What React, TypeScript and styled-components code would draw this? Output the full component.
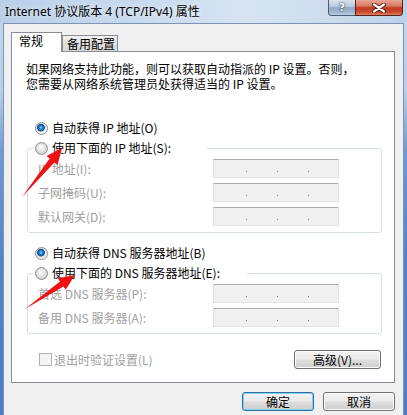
import React from 'react'
import styled, { createGlobalStyle } from 'styled-components'

const GlobalStyle = createGlobalStyle`
  html, body {
    margin: 0;
    padding: 0;
  }
  body {
    font-family: "Noto Sans CJK SC", "Noto Sans", sans-serif;
    font-size: 12px;
    color: #000;
    background: #fff;
  }
`

const Window = styled.div`
  position: relative;
  width: 407px;
  height: 415px;
  overflow: hidden;
  display: flex;
  flex-direction: column;
  background: linear-gradient(to bottom, #c3d6ec 0px, #b9cfe8 90px, #6f9bd6 150px, #4f84c9 260px, #4a7fc6 415px);
`

const TitleBar = styled.div`
  height: 23px;
  flex-shrink: 0;
  display: flex;
  align-items: flex-start;
  padding: 0 4px 0 5px;
  background: linear-gradient(to right, #b9cfe8 0%, #c8daee 35%, #d6e4f2 60%, #cddded 80%, #bcd1ea 100%);
`

const Title = styled.div`
  font-family: "Noto Sans", "Noto Sans CJK SC", sans-serif;
  font-size: 12px;
  line-height: 16px;
  margin-top: 4px;
  white-space: nowrap;
  text-shadow: 0 0 6px rgba(255, 255, 255, 0.9);
`

const Caption = styled.div`
  margin-left: auto;
  display: flex;
`

const HelpButton = styled.div`
  width: 27px;
  height: 16px;
  box-sizing: border-box;
  border: 1px solid #4b5b73;
  border-top: none;
  border-right: none;
  border-radius: 0 0 0 4px;
  background: linear-gradient(to bottom, #d8e3ef 0%, #b7c8dc 45%, #94aac4 50%, #a3b8d0 85%, #c2d3e6 100%);
  display: flex;
  align-items: center;
  justify-content: center;
  font-family: "DejaVu Sans", sans-serif;
  font-weight: bold;
  font-size: 11px;
  line-height: 12px;
  color: #fff;
  text-shadow: 0 0 1px #223044, 0 0 2px #223044;
`

const CloseButton = styled.div`
  width: 48px;
  height: 16px;
  box-sizing: border-box;
  border: 1px solid #5b2016;
  border-top: none;
  border-radius: 0 0 4px 0;
  background: linear-gradient(to bottom, #e8a696 0%, #d77a63 40%, #c13c22 52%, #c9482e 80%, #dd8363 100%);
  display: flex;
  align-items: center;
  justify-content: center;
`

const Client = styled.div`
  flex: 1;
  margin: 0 3px;
  background: #f0f0f0;
  border: 1px solid #7d93b1;
  border-bottom: none;
  padding: 8px 8px 0 7px;
`

const TabStrip = styled.div`
  position: relative;
  z-index: 1;
  display: flex;
  align-items: flex-end;
  height: 20px;
  margin-bottom: -1px;
`

const Tab = styled.div<{ $active?: boolean; $width: number }>`
  box-sizing: border-box;
  width: ${p => p.$width}px;
  height: ${p => (p.$active ? 20 : 16)}px;
  margin-bottom: ${p => (p.$active ? 0 : 1)}px;
  border: 1px solid #898c95;
  border-bottom: none;
  padding: 1px 0 0 ${p => (p.$active ? 7 : 4)}px;
  line-height: 14px;
  background: ${p => (p.$active ? '#fff' : 'linear-gradient(to bottom, #f2f2f2, #e0e0e0 50%, #d9d9d9)')};
  white-space: nowrap;
`

const Panel = styled.div`
  height: 332px;
  box-sizing: border-box;
  background: #fff;
  border: 1px solid #898c95;
  padding: 9px 12px 0 14px;
`

const Intro = styled.div`
  display: flex;
  flex-direction: column;
`

const IntroLine = styled.div`
  height: 15px;
  line-height: 15px;
  white-space: nowrap;
`

const RadioRow = styled.label<{ $top: number }>`
  display: flex;
  align-items: center;
  gap: 4px;
  height: 14px;
  line-height: 14px;
  margin-top: ${p => p.$top}px;
  padding-left: 9px;
  white-space: nowrap;
`

const RadioDot = styled.span<{ $checked?: boolean }>`
  flex-shrink: 0;
  width: 13px;
  height: 13px;
  box-sizing: border-box;
  border-radius: 50%;
  border: 1px solid #8b8d8f;
  background: ${p =>
    p.$checked
      ? 'radial-gradient(circle at 45% 42%, #8edcff 0, #2b8bd3 1.5px, #0c4d8c 3.5px, #d9dde1 4.2px, #f3f3f3 5.5px)'
      : 'radial-gradient(circle at 45% 40%, #ffffff 0, #f1f1f1 2px, #d6d6d6 5.5px)'};
`

const Group = styled.fieldset<{ $top: number }>`
  margin: ${p => p.$top}px 0 0 1px;
  min-width: 0;
  border: 1px solid #d5dfe5;
  border-radius: 3px;
  padding: 4px 0 6px 5px;
`

const GroupLegend = styled.legend<{ $width: number }>`
  box-sizing: border-box;
  width: ${p => p.$width}px;
  height: 14px;
  padding: 0 0 0 2px;
  display: flex;
  align-items: center;
  gap: 4px;
  line-height: 14px;
  white-space: nowrap;
`

const FieldGrid = styled.div`
  display: grid;
  grid-template-columns: 175px 126px;
  row-gap: 5px;
  align-items: center;
  margin-left: 5px;
`

const FieldLabel = styled.span`
  color: #a0a0a0;
  line-height: 14px;
  white-space: nowrap;
`

const IpBox = styled.div`
  height: 19px;
  box-sizing: border-box;
  border: 1px solid;
  border-color: #acacac #e3e3e3 #e3e3e3 #dedede;
  background: #f0f0f0;
  display: grid;
  grid-template-columns: 32px 2px 29px 2px 29px 2px 1fr;
`

const IpDot = styled.span`
  width: 1px;
  height: 1px;
  background: #7a7a7a;
  align-self: end;
  margin-bottom: 5px;
`

const BottomRow = styled.div`
  display: flex;
  align-items: center;
  justify-content: space-between;
  margin-top: 16px;
  padding: 0 1px 0 13px;
`

const CheckLabel = styled.label`
  display: flex;
  align-items: center;
  gap: 2px;
  color: #a0a0a0;
  line-height: 14px;
`

const CheckBox = styled.span`
  width: 13px;
  height: 13px;
  box-sizing: border-box;
  border: 1px solid #b1b1b1;
  background: #f4f4f4;
`

const Button = styled.button<{ $width: number; $default?: boolean }>`
  width: ${p => p.$width}px;
  height: 19px;
  box-sizing: border-box;
  padding: 0;
  font-family: inherit;
  font-size: 12px;
  line-height: 14px;
  color: #000;
  border: 1px solid ${p => (p.$default ? '#2f6f9f' : '#707070')};
  border-radius: 3px;
  box-shadow: inset 0 0 0 1px ${p => (p.$default ? '#7fd4f6' : '#fcfcfc')};
  background: linear-gradient(to bottom, #f2f2f2 0%, #ebebeb 48%, #dddddd 52%, #cfcfcf 100%);
`

const ButtonRow = styled.div`
  display: flex;
  justify-content: flex-end;
  gap: 9px;
  margin-top: 9px;
`

const Annotations = styled.svg`
  position: absolute;
  left: 0;
  top: 0;
  pointer-events: none;
`

type Field = { label: string }

const ipFields: Field[] = [
  { label: 'IP 地址(I):' },
  { label: '子网掩码(U):' },
  { label: '默认网关(D):' },
]

const dnsFields: Field[] = [
  { label: '首选 DNS 服务器(P):' },
  { label: '备用 DNS 服务器(A):' },
]

const IpInput = () => (
  <IpBox>
    <span />
    <IpDot />
    <span />
    <IpDot />
    <span />
    <IpDot />
    <span />
  </IpBox>
)

const Fields = ({ fields }: { fields: Field[] }) => (
  <FieldGrid>
    {fields.map(f => (
      <React.Fragment key={f.label}>
        <FieldLabel>{f.label}</FieldLabel>
        <IpInput />
      </React.Fragment>
    ))}
  </FieldGrid>
)

const App = () => (
  <>
    <GlobalStyle />
    <Window>
      <TitleBar>
        <Title>Internet 协议版本 4 (TCP/IPv4) 属性</Title>
        <Caption>
          <HelpButton>?</HelpButton>
          <CloseButton>
            <svg width="14" height="10" viewBox="0 0 14 10">
              <path d="M2 1.5 L12 8.5 M12 1.5 L2 8.5" stroke="#4a1810" strokeWidth="4" strokeLinecap="round" />
              <path d="M2 1.5 L12 8.5 M12 1.5 L2 8.5" stroke="#fff" strokeWidth="2.2" strokeLinecap="round" />
            </svg>
          </CloseButton>
        </Caption>
      </TitleBar>
      <Client>
        <TabStrip>
          <Tab $active $width={51}>常规</Tab>
          <Tab $width={56}>备用配置</Tab>
        </TabStrip>
        <Panel>
          <Intro>
            <IntroLine>如果网络支持此功能，则可以获取自动指派的 IP 设置。否则，</IntroLine>
            <IntroLine>您需要从网络系统管理员处获得适当的 IP 设置。</IntroLine>
          </Intro>

          <RadioRow $top={30}>
            <RadioDot $checked />
            <span>自动获得 IP 地址(O)</span>
          </RadioRow>
          <Group $top={6}>
            <GroupLegend $width={174}>
              <RadioDot />
              <span>使用下面的 IP 地址(S):</span>
            </GroupLegend>
            <Fields fields={ipFields} />
          </Group>

          <RadioRow $top={13}>
            <RadioDot $checked />
            <span>自动获得 DNS 服务器地址(B)</span>
          </RadioRow>
          <Group $top={6}>
            <GroupLegend $width={214}>
              <RadioDot />
              <span>使用下面的 DNS 服务器地址(E):</span>
            </GroupLegend>
            <Fields fields={dnsFields} />
          </Group>

          <BottomRow>
            <CheckLabel>
              <CheckBox />
              <span>退出时验证设置(L)</span>
            </CheckLabel>
            <Button $width={87}>高级(V)...</Button>
          </BottomRow>
        </Panel>
        <ButtonRow>
          <Button $width={72} $default>确定</Button>
          <Button $width={72}>取消</Button>
        </ButtonRow>
      </Client>
      <Annotations width="407" height="415" viewBox="0 0 407 415">
        <polygon points="22,197 49.7,158.6 46.5,156.1 62,148 57.5,164.9 54.3,162.4" fill="#f01010" />
        <polygon points="25,309 60,281.5 57.8,278.2 75,275 65.6,289.8 63.4,286.5" fill="#f01010" />
      </Annotations>
    </Window>
  </>
)

export default App
